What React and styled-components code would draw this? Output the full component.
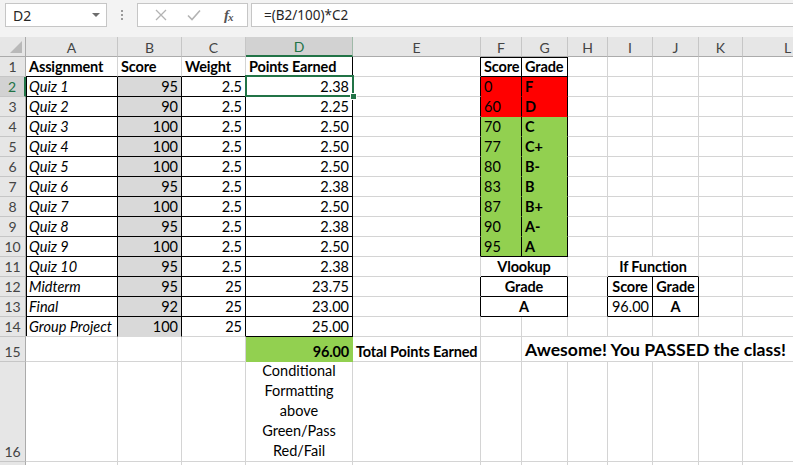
import React from 'react';
import styled, { createGlobalStyle } from 'styled-components';

const COLS = ['A', 'B', 'C', 'D', 'E', 'F', 'G', 'H', 'I', 'J', 'K', 'L'];
const COL_WIDTHS = [92, 64, 64, 107, 128, 41, 46, 40, 45, 46, 44, 90];
const ROW_HEIGHTS = [20, 20, 20, 20, 20, 20, 20, 20, 20, 20, 20, 20, 20, 20, 25, 100, 20];
const LABELLED_ROWS = 16;

const BLACK = '#000000';
const GRID = '#d4d4d4';
const GREEN = '#92d050';
const RED = '#ff0000';
const SHADE = '#d9d9d9';
const XL_GREEN = '#217346';

const SELECTED = { col: 'D', row: 2 };

const assignments = [
  ['Quiz 1', '95', '2.5', '2.38'],
  ['Quiz 2', '90', '2.5', '2.25'],
  ['Quiz 3', '100', '2.5', '2.50'],
  ['Quiz 4', '100', '2.5', '2.50'],
  ['Quiz 5', '100', '2.5', '2.50'],
  ['Quiz 6', '95', '2.5', '2.38'],
  ['Quiz 7', '100', '2.5', '2.50'],
  ['Quiz 8', '95', '2.5', '2.38'],
  ['Quiz 9', '100', '2.5', '2.50'],
  ['Quiz 10', '95', '2.5', '2.38'],
  ['Midterm', '95', '25', '23.75'],
  ['Final', '92', '25', '23.00'],
  ['Group Project', '100', '25', '25.00'],
];

const scale = [
  ['0', 'F'], ['60', 'D'], ['70', 'C'], ['77', 'C+'], ['80', 'B-'],
  ['83', 'B'], ['87', 'B+'], ['90', 'A-'], ['95', 'A'],
];

function buildSheet() {
  const s = {};
  const put = (ref, v, opts = {}) => { s[ref] = { v, ...opts }; };

  put('A1', 'Assignment', { b: true });
  put('B1', 'Score', { b: true });
  put('C1', 'Weight', { b: true });
  put('D1', 'Points Earned', { b: true });
  assignments.forEach(([name, score, weight, pts], i) => {
    const r = i + 2;
    put(`A${r}`, name, { i: true });
    put(`B${r}`, score, { align: 'right', fill: SHADE });
    put(`C${r}`, weight, { align: 'right' });
    put(`D${r}`, pts, { align: 'right' });
  });
  put('D15', '96.00', { align: 'right', b: true, fill: GREEN });
  put('E15', 'Total Points Earned', { b: true });
  put('D16', 'Conditional Formatting above Green/Pass Red/Fail', { align: 'center', wrap: true });

  put('F1', 'Score', { b: true });
  put('G1', 'Grade', { b: true });
  scale.forEach(([score, grade], i) => {
    const r = i + 2;
    const fill = r <= 3 ? RED : GREEN;
    put(`F${r}`, score, { fill });
    put(`G${r}`, grade, { fill, b: true });
  });

  put('F11', 'Vlookup', { b: true, align: 'center', span: 2 });
  put('F12', 'Grade', { b: true, align: 'center', span: 2 });
  put('F13', 'A', { b: true, align: 'center', span: 2 });

  put('I11', 'If Function', { b: true, align: 'center', span: 2 });
  put('I12', 'Score', { b: true, align: 'center' });
  put('J12', 'Grade', { b: true, align: 'center' });
  put('I13', '96.00', { align: 'right' });
  put('J13', 'A', { b: true, align: 'center' });

  put('G15', 'Awesome! You PASSED the class!', { b: true, big: true, span: 6 });
  return s;
}

// which black border lines a cell carries (right/bottom are its own, top/left drawn inset)
function edges(ci, row) {
  const e = { right: false, bottom: false, top: false, left: false };
  // points table A1:D14
  if (row === 1 && ci <= 3) e.bottom = true;
  if (row === 1 && ci === 3) e.right = true;
  if (row >= 2 && row <= 14 && ci <= 3) {
    e.right = true;
    if (row < 14 || ci === 3) e.bottom = true;
    if (ci === 0) e.left = true;
  }
  // grade scale F1:G10
  if (row <= 10 && ci >= 4 && ci <= 6) e.right = true;
  if (row === 1 && (ci === 5 || ci === 6)) { e.top = true; e.bottom = true; }
  if (row === 10 && (ci === 5 || ci === 6)) e.bottom = true;
  // vlookup block
  if (row === 11 && ci === 5) e.bottom = true;
  if ((row === 12 || row === 13) && (ci === 4 || ci === 5)) e.right = true;
  if ((row === 12 || row === 13) && ci === 5) e.bottom = true;
  // if function block
  if (row === 11 && ci === 8) e.bottom = true;
  if ((row === 12 || row === 13) && ci >= 7 && ci <= 9) e.right = true;
  if ((row === 12 || row === 13) && (ci === 8 || ci === 9)) e.bottom = true;
  return e;
}

const GlobalStyle = createGlobalStyle`
  html, body { margin: 0; padding: 0; background: #ffffff; overflow: hidden; }
  body { font-family: Lato, "Liberation Sans", sans-serif; }
`;

const Window = styled.div`
  width: 793px;
  height: 465px;
  overflow: hidden;
  display: flex;
  flex-direction: column;
  background: #ffffff;
`;

const FormulaBar = styled.div`
  flex: none;
  height: 37px;
  box-sizing: border-box;
  padding-top: 3px;
  display: flex;
  align-items: flex-start;
  background: #f3f3f3;
  font-family: "Noto Sans", "Open Sans", sans-serif;
  font-size: 13.5px;
  color: #262626;
`;

const NameBox = styled.div`
  margin-left: 5px;
  width: 102px;
  height: 24px;
  box-sizing: border-box;
  display: flex;
  align-items: center;
  justify-content: space-between;
  padding: 0 6px 0 7px;
  background: #ffffff;
  border: 1px solid #c6c6c6;
  font-size: 14px;
`;

const DropArrow = styled.span`
  width: 0;
  height: 0;
  border-left: 4px solid transparent;
  border-right: 4px solid transparent;
  border-top: 4px solid #6d6d6d;
`;

const Grip = styled.div`
  width: 30px;
  height: 24px;
  display: flex;
  flex-direction: column;
  align-items: center;
  justify-content: center;
  gap: 2px;

  span {
    width: 2px;
    height: 2px;
    background: #9a9a9a;
  }
`;

const ButtonBox = styled.div`
  width: 111px;
  height: 24px;
  box-sizing: border-box;
  display: flex;
  align-items: center;
  justify-content: space-around;
  padding: 0 2px 0 6px;
  background: #ffffff;
  border: 1px solid #c6c6c6;
`;

const BarButton = styled.span`
  width: 26px;
  height: 20px;
  display: flex;
  align-items: center;
  justify-content: center;
`;

const FxLabel = styled.span`
  font-family: "Liberation Serif", serif;
  font-style: italic;
  font-weight: 700;
  font-size: 15px;
  color: #555555;
  letter-spacing: -1px;

  sub {
    font-size: 11px;
    vertical-align: -1px;
  }
`;

const FormulaInput = styled.div`
  margin-left: 3px;
  flex: 1;
  height: 24px;
  box-sizing: border-box;
  display: flex;
  align-items: center;
  padding-left: 12px;
  background: #ffffff;
  border: 1px solid #c6c6c6;
  border-right: none;
`;

const Sheet = styled.div`
  display: grid;
  grid-template-columns: 26px ${COL_WIDTHS.map((w) => `${w}px`).join(' ')};
  grid-template-rows: 20px ${ROW_HEIGHTS.map((h) => `${h}px`).join(' ')};
  font-size: 14.5px;
  color: #000000;
`;

const Corner = styled.div`
  position: relative;
  background: #e6e6e6;
  border-right: 1px solid #ababab;
  border-bottom: 1px solid #ababab;
  box-sizing: border-box;

  &::after {
    content: '';
    position: absolute;
    right: 3px;
    bottom: 3px;
    width: 0;
    height: 0;
    border-left: 12px solid transparent;
    border-bottom: 12px solid #b9b9b9;
  }
`;

const ColHeader = styled.div`
  box-sizing: border-box;
  display: flex;
  align-items: center;
  justify-content: center;
  padding-top: 1px;
  background: ${(p) => (p.$active ? '#d2d2d2' : '#e6e6e6')};
  color: ${(p) => (p.$active ? XL_GREEN : '#444444')};
  border-right: 1px solid ${(p) => (p.$active ? '#9fb9a8' : '#c6c6c6')};
  border-bottom: ${(p) => (p.$active ? `2px solid ${XL_GREEN}` : '1px solid #ababab')};
  font-size: 14px;
`;

const RowHeader = styled.div`
  box-sizing: border-box;
  display: flex;
  align-items: flex-end;
  justify-content: center;
  line-height: 18px;
  background: ${(p) => (p.$active ? '#d2d2d2' : '#e6e6e6')};
  color: ${(p) => (p.$active ? XL_GREEN : '#444444')};
  border-bottom: 1px solid #c6c6c6;
  border-right: ${(p) => (p.$active ? `2px solid ${XL_GREEN}` : '1px solid #ababab')};
  font-size: 14px;
`;

const ALIGN = { left: 'flex-start', right: 'flex-end', center: 'center' };

const Cell = styled.div`
  position: relative;
  box-sizing: border-box;
  grid-column: span ${(p) => p.$span};
  display: flex;
  align-items: flex-end;
  justify-content: ${(p) => ALIGN[p.$align]};
  padding: 0 3px;
  background: ${(p) => p.$fill || '#ffffff'};
  border-right: 1px solid ${(p) => p.$right};
  border-bottom: 1px solid ${(p) => p.$bottom};
  box-shadow: ${(p) => {
    const s = [];
    if (p.$top) s.push(`inset 0 1px 0 ${BLACK}`);
    if (p.$left) s.push(`inset 1px 0 0 ${BLACK}`);
    return s.length ? s.join(', ') : 'none';
  }};
  font-weight: ${(p) => (p.$bold ? 700 : 400)};
  font-style: ${(p) => (p.$italic ? 'italic' : 'normal')};
  font-size: ${(p) => (p.$big ? '17.6px' : 'inherit')};
  letter-spacing: ${(p) => (p.$bold && !p.$big ? '-0.15px' : 'normal')};
  line-height: ${(p) => (p.$big ? '22px' : '18px')};
  white-space: ${(p) => (p.$wrap ? 'normal' : 'nowrap')};
  text-align: ${(p) => p.$align};
  ${(p) => p.$wrap && 'line-height: 20px;'}
`;

const Selection = styled.div`
  position: absolute;
  z-index: 2;
  top: -2px;
  left: -1px;
  right: -2px;
  bottom: -1px;
  border: 2px solid ${XL_GREEN};
  pointer-events: none;

  &::after {
    content: '';
    position: absolute;
    right: -5px;
    bottom: -5px;
    width: 5px;
    height: 5px;
    background: ${XL_GREEN};
    border: 1px solid #ffffff;
  }
`;

const CancelIcon = () => (
  <svg width="12" height="12" viewBox="0 0 12 12">
    <path d="M1 1 L11 11 M11 1 L1 11" stroke="#b3b3b3" strokeWidth="1.3" fill="none" />
  </svg>
);

const EnterIcon = () => (
  <svg width="14" height="12" viewBox="0 0 14 12">
    <path d="M1 6.5 L5 10.5 L13 1.5" stroke="#b3b3b3" strokeWidth="1.6" fill="none" />
  </svg>
);

function SheetGrid() {
  const data = buildSheet();
  const out = [<Corner key="corner" />];

  COLS.forEach((c) => {
    out.push(<ColHeader key={`h${c}`} $active={c === SELECTED.col}>{c}</ColHeader>);
  });

  ROW_HEIGHTS.forEach((_, idx) => {
    const row = idx + 1;
    out.push(
      <RowHeader key={`r${row}`} $active={row === SELECTED.row}>
        {row <= LABELLED_ROWS ? row : ''}
      </RowHeader>
    );
    let ci = 0;
    while (ci < COLS.length) {
      const ref = `${COLS[ci]}${row}`;
      const spec = data[ref] || { v: '' };
      const span = spec.span || 1;
      const e = edges(ci, row);
      const plain = spec.fill || GRID;
      const isSel = COLS[ci] === SELECTED.col && row === SELECTED.row;
      out.push(
        <Cell
          key={ref}
          $span={span}
          $align={spec.align || 'left'}
          $fill={spec.fill}
          $right={e.right ? BLACK : plain}
          $bottom={e.bottom ? BLACK : plain}
          $top={e.top}
          $left={e.left}
          $bold={spec.b}
          $italic={spec.i}
          $big={spec.big}
          $wrap={spec.wrap}
        >
          {spec.v}
          {isSel && <Selection />}
        </Cell>
      );
      ci += span;
    }
  });

  return <Sheet>{out}</Sheet>;
}

export default function App() {
  return (
    <Window>
      <GlobalStyle />
      <FormulaBar>
        <NameBox>
          <span>D2</span>
          <DropArrow />
        </NameBox>
        <Grip>
          <span />
          <span />
          <span />
        </Grip>
        <ButtonBox>
          <BarButton><CancelIcon /></BarButton>
          <BarButton><EnterIcon /></BarButton>
          <BarButton><FxLabel>f<sub>x</sub></FxLabel></BarButton>
        </ButtonBox>
        <FormulaInput>=(B2/100)*C2</FormulaInput>
      </FormulaBar>
      <SheetGrid />
    </Window>
  );
}
